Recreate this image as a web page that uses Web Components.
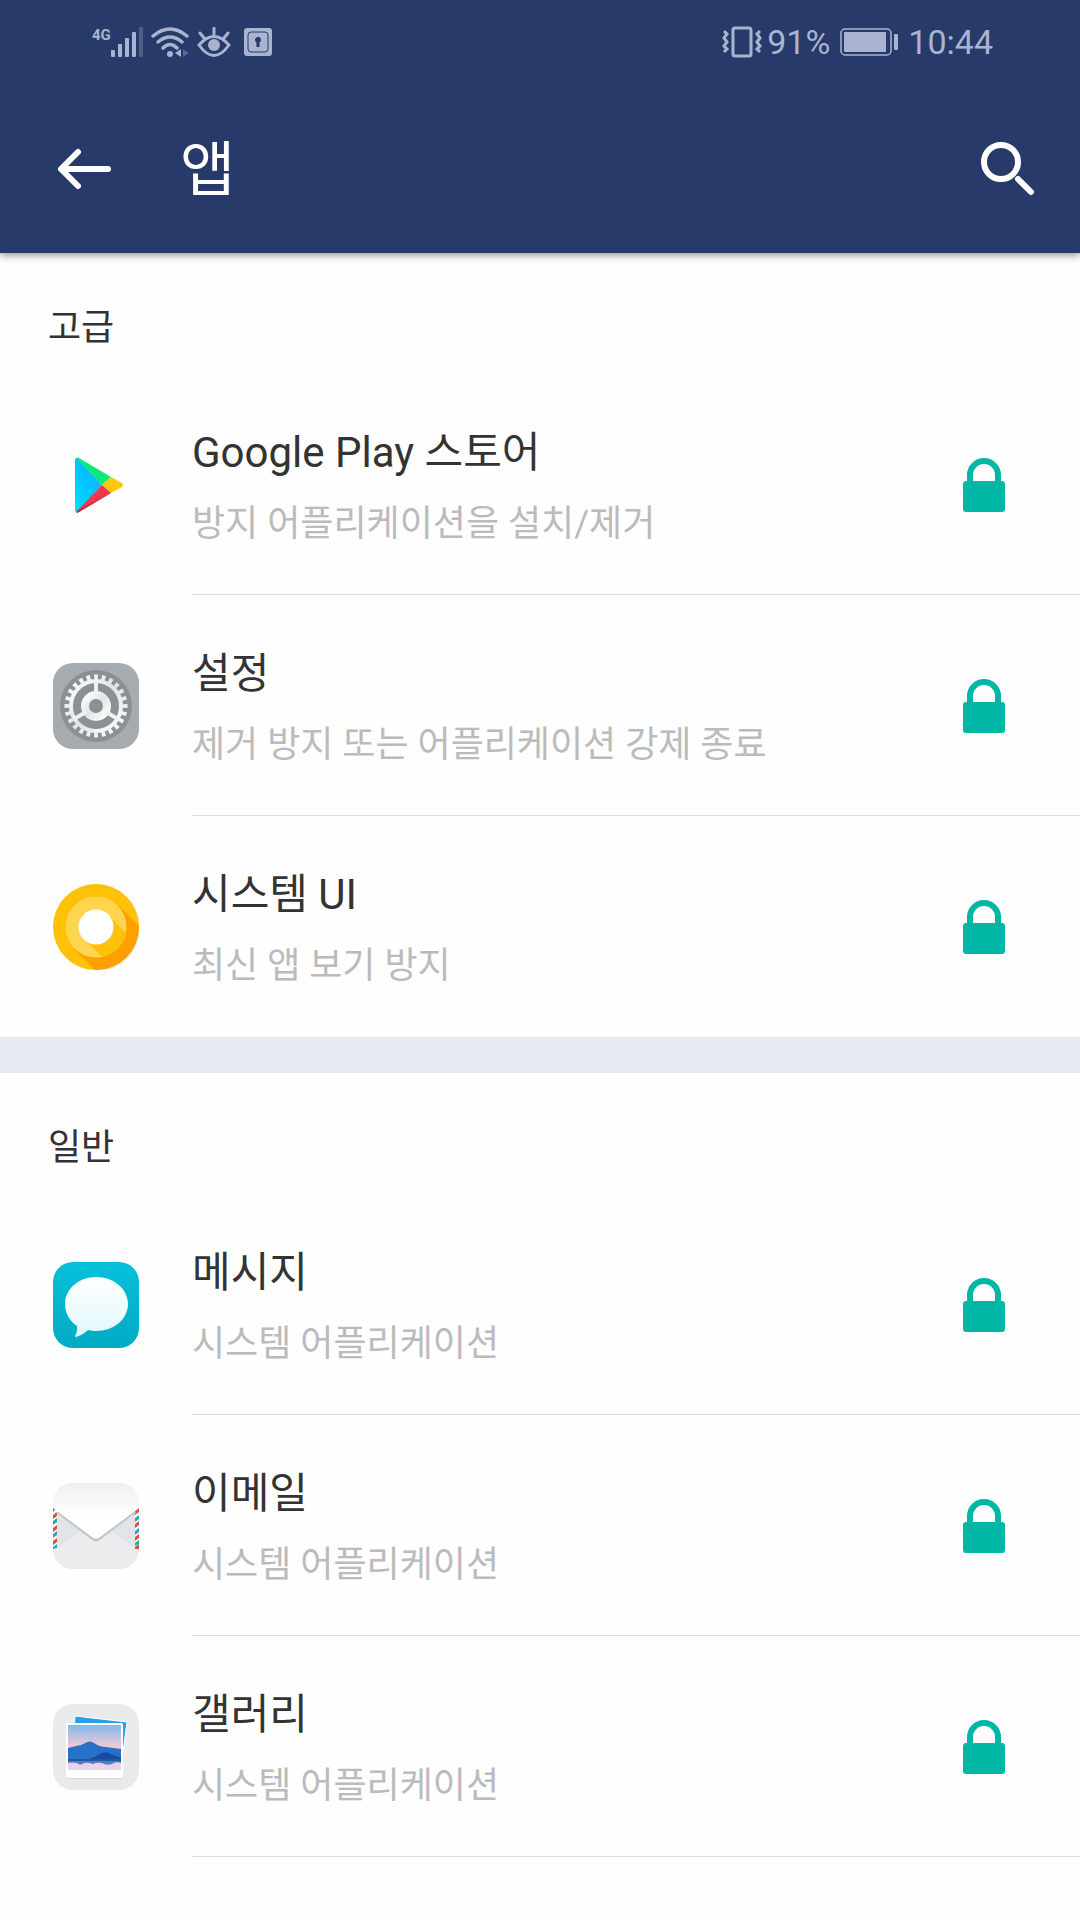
<!DOCTYPE html>
<html lang="ko">
<head>
<meta charset="utf-8">
<meta name="viewport" content="width=device-width, initial-scale=1">
<title>앱</title>
<style>
  body {
    margin: 0;
    height: 100vh;
    overflow: hidden;
    display: flex;
    flex-direction: column;
    background: #fefefe;
    color: #333;
    font-family: Roboto, "Noto Sans CJK KR", sans-serif;
  }

  header {
    z-index: 1;
    background: #273a69;
    box-shadow: 0 2px 8px rgba(0, 0, 0, 0.45);
  }

  main {
    flex: 1;
    min-height: 0;
    overflow: hidden;
  }
</style>
</head>
<body>
<header>
  <status-bar battery="91%" time="10:44"></status-bar>
  <tool-bar>앱</tool-bar>
</header>
<main>
  <app-section name="고급">
    <app-row name="Google Play 스토어" details="방지 어플리케이션을 설치/제거"><app-icon kind="play"></app-icon></app-row>
    <app-row name="설정" details="제거 방지 또는 어플리케이션 강제 종료"><app-icon kind="settings"></app-icon></app-row>
    <app-row name="시스템 UI" details="최신 앱 보기 방지"><app-icon kind="system"></app-icon></app-row>
  </app-section>
  <app-section name="일반">
    <app-row name="메시지" details="시스템 어플리케이션"><app-icon kind="message"></app-icon></app-row>
    <app-row name="이메일" details="시스템 어플리케이션"><app-icon kind="email"></app-icon></app-row>
    <app-row name="갤러리" details="시스템 어플리케이션"><app-icon kind="gallery"></app-icon></app-row>
    <app-row name="2048" details=""></app-row>
  </app-section>
</main>

<template id="status-bar">
  <style>
    :host {
      display: flex;
      justify-content: space-between;
      height: 84px;
      padding: 0 87px 0 92px;
      box-sizing: border-box;
      color: #a9b4d0;
      font-size: 34px;
      line-height: 84px;
    }

    div {
      display: flex;
      align-items: center;
      gap: 8px;
    }

    .signal {
      gap: 0;
      align-items: flex-start;
    }

    .signal span {
      font-size: 15px;
      font-weight: bold;
      line-height: 16px;
    }

    .battery {
      gap: 10px;
    }

    .level {
      gap: 5px;
    }

    svg {
      display: block;
      fill: currentColor;
    }
  </style>
  <div>
    <div class="signal">
      <span>4G</span>
      <svg width="32" height="30" viewBox="0 0 32 30">
        <rect x="0" y="23" width="4" height="7" rx="1"/>
        <rect x="7" y="17" width="4" height="13" rx="1"/>
        <rect x="14" y="11" width="4" height="19" rx="1"/>
        <rect x="21" y="5" width="4" height="25" rx="1"/>
        <rect x="28" y="0" width="4" height="30" rx="1" opacity="0.3"/>
      </svg>
    </div>
    <svg width="38" height="30" viewBox="0 0 38 30">
      <g fill="none" stroke="currentColor" stroke-width="3.500" stroke-linecap="round">
        <path d="M2 9Q19 -5 36 9M7 15Q19 5 31 15M12 21Q19 14 26 21"/>
      </g>
      <circle cx="19" cy="27" r="3"/>
      <path d="M30 22v8l-6-4z"/>
      <path d="M32 22v8l6-4z" opacity="0.35"/>
    </svg>
    <svg width="34" height="30" viewBox="0 0 34 30">
      <path d="M2 18Q17 1 32 18Q17 39 2 18zM17 1v6M3 6l4 5M31 6l-4 5" fill="none" stroke="currentColor" stroke-width="3" stroke-linecap="round"/>
      <circle cx="17" cy="18" r="6"/>
    </svg>
    <svg width="36" height="30" viewBox="-5 -1 36 30">
      <rect x="0" y="0" width="28" height="28" rx="3"/>
      <rect x="4" y="4" width="20" height="20" rx="3" fill="none" stroke="#273a69" stroke-width="1"/>
      <path d="M11 12a3 3 0 1 1 4.500 2.500V19h-3v-4.500A3 3 0 0 1 11 12z" fill="#273a69"/>
    </svg>
  </div>
  <div class="battery">
    <div class="level">
      <svg width="40" height="32" viewBox="0 0 40 32">
        <g fill="none" stroke="currentColor" stroke-width="3">
          <rect x="11" y="2" width="18" height="28" rx="2"/>
          <path d="M2 5l3 3-3 4 3 4-3 4 3 3-3 3M38 5l-3 3 3 4-3 4 3 4-3 3 3 3"/>
        </g>
      </svg>
      <span id="battery"></span>
    </div>
    <svg width="58" height="28" viewBox="0 0 58 28">
      <rect x="1" y="1" width="50" height="26" rx="4" fill="none" stroke="currentColor" stroke-width="1.500"/>
      <rect x="4" y="4" width="42" height="20" rx="1"/>
      <rect x="54" y="6" width="4" height="16" rx="1"/>
    </svg>
    <span id="time"></span>
  </div>
</template>

<template id="tool-bar">
  <style>
    :host {
      display: flex;
      align-items: center;
      height: 169px;
      padding: 0 45px 0 56px;
      box-sizing: border-box;
      color: #fff;
    }

    h1 {
      flex: 1;
      margin: 0 0 0 68px;
      padding-top: 4px;
      font-size: 60px;
      font-weight: 400;
      line-height: 60px;
    }

    button {
      padding: 0;
      border: 0;
      background: none;
      color: inherit;
    }

    svg {
      display: block;
      fill: none;
      stroke: currentColor;
      stroke-width: 6;
      stroke-linecap: round;
      stroke-linejoin: round;
    }
  </style>
  <button aria-label="뒤로">
    <svg width="56" height="44" viewBox="0 0 56 44"><path d="M52 22H6M22 5L5 22l17 17"/></svg>
  </button>
  <h1><slot></slot></h1>
  <button aria-label="검색">
    <svg width="56" height="56" viewBox="0 0 56 56"><circle cx="22" cy="21" r="17"/><path d="M39 38l13 13"/></svg>
  </button>
</template>

<template id="app-section">
  <style>
    :host {
      display: block;
    }

    :host(:not(:last-of-type)) {
      border-bottom: 36px solid #e6e9f2;
    }

    h2 {
      margin: 0;
      padding: 51px 48px 22px;
      font-size: 36px;
      font-weight: normal;
      line-height: 48px;
    }
  </style>
  <h2></h2>
  <slot></slot>
</template>

<template id="app-row">
  <style>
    :host {
      display: flex;
      padding-left: 53px;
    }

    .icon {
      width: 86px;
      padding-top: 68px;
    }

    .content {
      flex: 1;
      display: flex;
      justify-content: space-between;
      min-height: 221px;
      box-sizing: border-box;
      margin-left: 53px;
      padding: 49px 75px 0 0;
      border-bottom: 1px solid #dcdede;
    }

    :host(:last-of-type) .content {
      border-bottom-color: transparent;
    }

    h3, p {
      margin: 0;
      font-weight: normal;
    }

    h3 {
      font-size: 42px;
      line-height: 60px;
    }

    p {
      margin-top: 15px;
      color: #bbb;
      font-size: 36px;
      line-height: 52px;
    }

    button {
      align-self: flex-start;
      margin-top: 35px;
      padding: 0;
      border: 0;
      background: none;
      color: #00b7a5;
    }

    svg {
      display: block;
    }
  </style>
  <div class="icon"><slot></slot></div>
  <div class="content">
    <div>
      <h3></h3>
      <p></p>
    </div>
    <button aria-pressed="true">
      <svg width="42" height="54" viewBox="0 0 42 54">
        <path d="M7 26V17a14 14 0 0 1 28 0v9" fill="none" stroke="currentColor" stroke-width="6"/>
        <rect x="0" y="23" width="42" height="31" rx="3" fill="currentColor"/>
      </svg>
    </button>
  </div>
</template>

<script>
const icons = {
  play: `
    <defs><linearGradient id="blue" x1="1" y1="0" x2="0" y2="1"><stop stop-color="#2fa9f5"/><stop offset="0.5" stop-color="#00c3ff"/><stop offset="1" stop-color="#00e1ff"/></linearGradient></defs>
    <path d="M22 18q0-2 2-2L49 43 24 70q-2 0-2-2z" fill="url(#blue)"/>
    <path d="M23 16q1-1 3 0L58 35 49 43z" fill="#0ce87b"/>
    <path d="M58 35l11 6q2 2 0 4L58 51 49 43z" fill="#ffc70a"/>
    <path d="M49 43l9 8-32 19q-2 1-3 0z" fill="#f4364c"/>
    <path d="M58 51L26 70q-2 1-3 0l4-3z" fill="#b83245"/>`,
  settings: `
    <defs><linearGradient id="metal" x1="0" y1="0" x2="1" y2="1"><stop stop-color="#fff"/><stop offset="0.5" stop-color="#e2e3e4"/><stop offset="1" stop-color="#fff"/></linearGradient></defs>
    <rect width="86" height="86" rx="20" fill="#a6abb0"/>
    <circle cx="43" cy="43" r="36" fill="#8b9095"/>
    <g fill="none" stroke="url(#metal)">
      <circle cx="43" cy="43" r="29" stroke-width="5" pathLength="48" stroke-dasharray="1 1" stroke-dashoffset="0.5"/>
      <circle cx="43" cy="43" r="25" stroke-width="4"/>
      <circle cx="43" cy="43" r="11" stroke-width="8"/>
    </g>
    <path d="M43 31V17M33 49L21 56M53 49l12 7" stroke="#f0f1f1" stroke-width="4"/>`,
  system: `
    <defs>
      <clipPath id="outer"><circle cx="43" cy="43" r="43"/></clipPath>
      <clipPath id="inner"><circle cx="43" cy="43" r="30.500"/></clipPath>
    </defs>
    <circle cx="44" cy="44" r="43" fill="#e9e9ee"/>
    <circle cx="43" cy="43" r="43" fill="#ffc107"/>
    <path d="M65 21l40 40-44 44-40-40z" fill="#ffa000" clip-path="url(#outer)"/>
    <circle cx="43" cy="43" r="30.500" fill="#ffd54f"/>
    <path d="M55 31l40 40-24 24-40-40z" fill="#ffc107" clip-path="url(#inner)"/>
    <circle cx="43" cy="43" r="17.500" fill="#fff"/>`,
  message: `
    <defs>
      <linearGradient id="teal" x2="0" y2="1"><stop stop-color="#06c0da"/><stop offset="1" stop-color="#00aac4"/></linearGradient>
      <linearGradient id="bubble" x2="0" y2="1"><stop stop-color="#fff"/><stop offset="1" stop-color="#e0f8fd"/></linearGradient>
    </defs>
    <rect width="86" height="86" rx="20" fill="url(#teal)"/>
    <path d="M43 15c18 0 32 12 32 27S61 69 43 69q-4 0-8-1-5 5-12 7-2 0 0-3 2-4 1-8C16 59 12 50 12 42c0-15 14-27 31-27z" fill="url(#bubble)"/>`,
  email: `
    <defs><linearGradient id="flap" x2="0" y2="1"><stop stop-color="#eff0f0"/><stop offset="0.6" stop-color="#fff"/></linearGradient></defs>
    <rect width="86" height="86" rx="20" fill="#ebecee"/>
    <path d="M0 25l27 22L4 62H0zM86 25L59 47l23 15h4z" fill="#e2e5e7"/>
    <path d="M4 64l23-17M82 64L59 47" stroke="#dadcde" fill="none"/>
    <path d="M0 25h4v41H0zM82 25h4v41h-4z" fill="#fff"/>
    <path d="M0 32l4-3v4l-4 3zM0 45l4-3v4l-4 3zM0 58l4-3v4l-4 3zM82 28l4-3v4l-4 3zM82 41l4-3v4l-4 3zM82 54l4-3v4l-4 3zM82 64l4-3v5h-4z" fill="#d8503f"/>
    <path d="M0 25l3 1-3 3zM0 38l4-3v4l-4 3zM0 51l4-3v4l-4 3zM0 64l4-3v4l-4 1zM82 35l4-3v4l-4 3zM82 48l4-3v4l-4 3zM82 60l4-3v4l-4 2z" fill="#22a9b5"/>
    <path d="M2 29l37 28q4 3 8 0l37-28z" fill="#c5c7c9"/>
    <path d="M0 25V20A20 20 0 0 1 20 0H66A20 20 0 0 1 86 20V25L47 54q-4 3-8 0z" fill="url(#flap)"/>`,
  gallery: `
    <defs><linearGradient id="sky" x2="0" y2="1"><stop stop-color="#82b9ee"/><stop offset="0.45" stop-color="#eac8d5"/><stop offset="1" stop-color="#e5d5ec"/></linearGradient></defs>
    <rect width="86" height="86" rx="20" fill="#e9eaeb"/>
    <path d="M22 12l52 6-4 30-50-8z" fill="#2b9ee6" stroke="#fff"/>
    <rect x="13" y="20" width="57" height="55" rx="2" fill="#d4d6d8"/>
    <rect x="13" y="19" width="57" height="55" rx="2" fill="#fff"/>
    <rect x="15" y="21" width="53" height="45" fill="url(#sky)"/>
    <path d="M15 44l8-2q5 0 9-3 5-3 9 0 6 4 12 4l15 2v11H15z" fill="#2871c8"/>
    <path d="M36 55q6-2 9-4 8-5 13-1l10 4v2H36z" fill="#164b9f"/>
    <path d="M15 55h53v4q-6-2-9 1-6 2-10-1-5-1-9 1-6-2-9-1-4 3-7 0-5-1-9 0z" fill="#4e7fc0"/>
    <path d="M15 55h53v2H15z" fill="#24589d"/>`
}

function attach(element, id) {
  element.attachShadow({ mode: 'open' })
  element.shadowRoot.appendChild(document.getElementById(id).content.cloneNode(true))
}

class StatusBar extends HTMLElement {
  constructor() {
    super()
    attach(this, 'status-bar')
    this.shadowRoot.querySelector('#battery').textContent = this.getAttribute('battery')
    this.shadowRoot.querySelector('#time').textContent = this.getAttribute('time')
  }
}

class ToolBar extends HTMLElement {
  constructor() {
    super()
    attach(this, 'tool-bar')
  }
}

class AppSection extends HTMLElement {
  constructor() {
    super()
    attach(this, 'app-section')
    this.shadowRoot.querySelector('h2').textContent = this.getAttribute('name')
  }
}

class AppRow extends HTMLElement {
  constructor() {
    super()
    attach(this, 'app-row')
    this.shadowRoot.querySelector('h3').textContent = this.getAttribute('name')
    this.shadowRoot.querySelector('p').textContent = this.getAttribute('details')
    this.shadowRoot.querySelector('button').setAttribute('aria-label', this.getAttribute('name') + ' 잠금')
  }
}

class AppIcon extends HTMLElement {
  constructor() {
    super()
    this.attachShadow({ mode: 'open' })
    this.shadowRoot.innerHTML = `
      <style>
        :host { display: block; }
        svg { display: block; }
      </style>
      <svg width="86" height="86" viewBox="0 0 86 86" aria-hidden="true">${icons[this.getAttribute('kind')]}</svg>
    `
  }
}

customElements.define('status-bar', StatusBar)
customElements.define('tool-bar', ToolBar)
customElements.define('app-section', AppSection)
customElements.define('app-row', AppRow)
customElements.define('app-icon', AppIcon)
</script>
</body>
</html>
